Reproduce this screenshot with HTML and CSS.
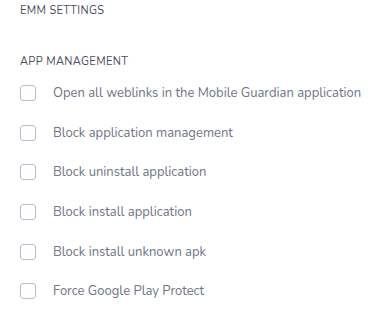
FILE: index.html
```html
<!DOCTYPE html>
<html lang="en">
<head>
    <meta charset="UTF-8">
    <title>EMM settings</title>
    <link rel="stylesheet" href="styles.css">
</head>
<body>
    <div class="settings">
        <h3 class="title">EMM SETTINGS</h3>
        <h4 class="section">APP MANAGEMENT</h4>
        <ul class="options">
            <li class="option"><span class="box"></span>Open all weblinks in the Mobile Guardian application</li>
            <li class="option"><span class="box"></span>Block application management</li>
            <li class="option"><span class="box"></span>Block uninstall application</li>
            <li class="option"><span class="box"></span>Block install application</li>
            <li class="option"><span class="box"></span>Block install unknown apk</li>
            <li class="option"><span class="box"></span>Force Google Play Protect</li>
        </ul>
    </div>
</body>
</html>
```
FILE: styles.css
```css
*{
    margin: 0;
    padding: 0;
    box-sizing: border-box;
}
body{
    background-color: #fff;
    font-family: "Nunito", "Lato", "Open Sans", sans-serif;
    color: #6f7486;
}
.settings{
    padding: 3px 4px 0 20px;
}
.title, .section{
    font-size: 11px;
    font-weight: 400;
    letter-spacing: 0.35px;
    color: #4a4f5c;
    line-height: 16px;
}
.section{
    margin-top: 35px;
}
.options{
    list-style: none;
    margin-top: 3px;
}
.option{
    display: flex;
    align-items: center;
    height: 39.7px;
    font-size: 13px;
    white-space: nowrap;
}
.box{
    width: 16px;
    height: 16px;
    border: 1px solid #b9bfd0;
    border-radius: 3px;
    margin-right: 17px;
    flex-shrink: 0;
}
```
